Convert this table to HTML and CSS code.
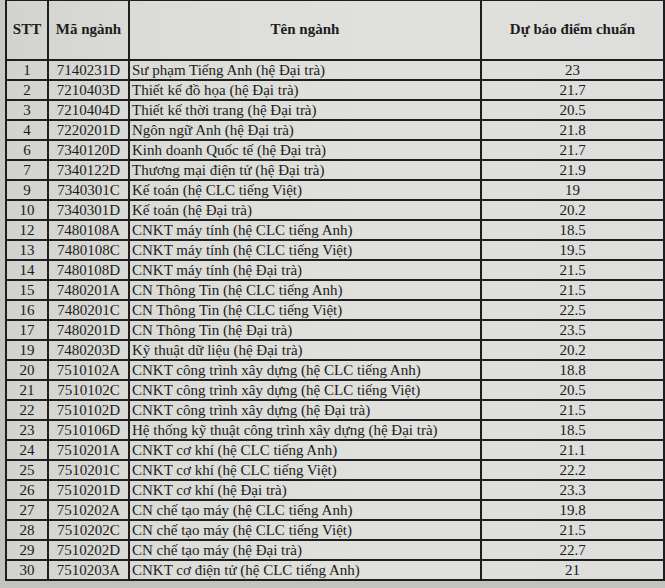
FILE: index.html
```html
<!DOCTYPE html>
<html lang="vi">
<head>
<meta charset="utf-8">
<title>Dự báo điểm chuẩn</title>
<link rel="stylesheet" href="styles.css">
</head>
<body>
<div class="page">
<table class="scores">
  <colgroup>
    <col class="c-stt"><col class="c-ma"><col class="c-ten"><col class="c-diem">
  </colgroup>
  <thead>
    <tr><th>STT</th><th>Mã ngành</th><th>Tên ngành</th><th>Dự báo điểm chuẩn</th></tr>
  </thead>
  <tbody>
    <tr><td>1</td><td>7140231D</td><td>Sư phạm Tiếng Anh (hệ Đại trà)</td><td>23</td></tr>
    <tr><td>2</td><td>7210403D</td><td>Thiết kế đồ họa (hệ Đại trà)</td><td>21.7</td></tr>
    <tr><td>3</td><td>7210404D</td><td>Thiết kế thời trang (hệ Đại trà)</td><td>20.5</td></tr>
    <tr><td>4</td><td>7220201D</td><td>Ngôn ngữ Anh (hệ Đại trà)</td><td>21.8</td></tr>
    <tr><td>6</td><td>7340120D</td><td>Kinh doanh Quốc tế (hệ Đại trà)</td><td>21.7</td></tr>
    <tr><td>7</td><td>7340122D</td><td>Thương mại điện tử (hệ Đại trà)</td><td>21.9</td></tr>
    <tr><td>9</td><td>7340301C</td><td>Kế toán (hệ CLC tiếng Việt)</td><td>19</td></tr>
    <tr><td>10</td><td>7340301D</td><td>Kế toán (hệ Đại trà)</td><td>20.2</td></tr>
    <tr><td>12</td><td>7480108A</td><td>CNKT máy tính (hệ CLC tiếng Anh)</td><td>18.5</td></tr>
    <tr><td>13</td><td>7480108C</td><td>CNKT máy tính (hệ CLC tiếng Việt)</td><td>19.5</td></tr>
    <tr><td>14</td><td>7480108D</td><td>CNKT máy tính (hệ Đại trà)</td><td>21.5</td></tr>
    <tr><td>15</td><td>7480201A</td><td>CN Thông Tin (hệ CLC tiếng Anh)</td><td>21.5</td></tr>
    <tr><td>16</td><td>7480201C</td><td>CN Thông Tin (hệ CLC tiếng Việt)</td><td>22.5</td></tr>
    <tr><td>17</td><td>7480201D</td><td>CN Thông Tin (hệ Đại trà)</td><td>23.5</td></tr>
    <tr><td>19</td><td>7480203D</td><td>Kỹ thuật dữ liệu (hệ Đại trà)</td><td>20.2</td></tr>
    <tr><td>20</td><td>7510102A</td><td>CNKT công trình xây dựng (hệ CLC tiếng Anh)</td><td>18.8</td></tr>
    <tr><td>21</td><td>7510102C</td><td>CNKT công trình xây dựng (hệ CLC tiếng Việt)</td><td>20.5</td></tr>
    <tr><td>22</td><td>7510102D</td><td>CNKT công trình xây dựng (hệ Đại trà)</td><td>21.5</td></tr>
    <tr><td>23</td><td>7510106D</td><td>Hệ thống kỹ thuật công trình xây dựng (hệ Đại trà)</td><td>18.5</td></tr>
    <tr><td>24</td><td>7510201A</td><td>CNKT cơ khí (hệ CLC tiếng Anh)</td><td>21.1</td></tr>
    <tr><td>25</td><td>7510201C</td><td>CNKT cơ khí (hệ CLC tiếng Việt)</td><td>22.2</td></tr>
    <tr><td>26</td><td>7510201D</td><td>CNKT cơ khí (hệ Đại trà)</td><td>23.3</td></tr>
    <tr><td>27</td><td>7510202A</td><td>CN chế tạo máy (hệ CLC tiếng Anh)</td><td>19.8</td></tr>
    <tr><td>28</td><td>7510202C</td><td>CN chế tạo máy (hệ CLC tiếng Việt)</td><td>21.5</td></tr>
    <tr><td>29</td><td>7510202D</td><td>CN chế tạo máy (hệ Đại trà)</td><td>22.7</td></tr>
    <tr><td>30</td><td>7510203A</td><td>CNKT cơ điện tử (hệ CLC tiếng Anh)</td><td>21</td></tr>
  </tbody>
</table>
</div>
</body>
</html>
```

FILE: styles.css
```css
html, body {
  margin: 0;
  padding: 0;
}
body {
  width: 665px;
  height: 588px;
  overflow: hidden;
  background: linear-gradient(180deg, #c9c9c5 0%, #c2c2be 100%);
  font-family: "Liberation Serif", "Times New Roman", serif;
  color: #1c1c1c;
}
.page {
  padding: 0 2px 0 5px;
}
.scores {
  border-collapse: collapse;
  width: 658px;
  table-layout: fixed;
  background: linear-gradient(90deg, #d2d2ce 0%, #dcdcd8 25%, #e0e0dc 60%, #dddddb 100%);
}
.c-stt { width: 42px; }
.c-ma { width: 81px; }
.c-ten { width: 352px; }
.c-diem { width: 183px; }
.scores th, .scores td {
  border: 2px solid #1e1e1e;
  padding: 0;
}
.scores th {
  height: 56px;
  font-weight: bold;
  font-size: 15px;
  text-align: center;
  vertical-align: middle;
  padding-bottom: 2px;
  border-top-width: 1px;
}
.scores td {
  height: 18px;
  font-size: 15px;
  line-height: 18px;
  text-align: center;
  white-space: nowrap;
}
.scores td:nth-child(3) {
  text-align: left;
  padding-left: 2px;
}
```
